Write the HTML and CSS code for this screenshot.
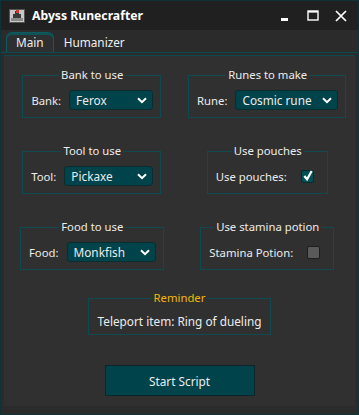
FILE: index.html
```html
<!DOCTYPE html>
<html lang="en">
<head>
    <meta charset="UTF-8">
    <title>Abyss Runecrafter</title>
    <link rel="stylesheet" href="styles.css">
</head>
<body>
<div class="window">
    <div class="titleBar">
        <svg class="appIcon" width="16" height="16" viewBox="0 0 16 16">
            <rect x="0.5" y="1.5" width="15" height="13" fill="#c8c8c8" stroke="#555"/>
            <rect x="2" y="10" width="12" height="3" fill="#8a8a8a"/>
            <path d="M6 3h4v3h2v4H4V6h2z" fill="#3a3a3a"/>
            <rect x="7" y="2" width="3" height="3" fill="#d23a2a"/>
        </svg>
        <span class="title">Abyss Runecrafter</span>
        <div class="winCtrl">
            <svg width="12" height="12" viewBox="0 0 12 12"><rect x="2" y="8" width="7" height="3" fill="#fff"/></svg>
            <svg width="12" height="12" viewBox="0 0 12 12"><rect x="1" y="1" width="10" height="9" fill="none" stroke="#fff" stroke-width="1.4"/><rect x="1" y="1" width="10" height="1.6" fill="#fff"/></svg>
            <svg width="12" height="12" viewBox="0 0 12 12"><path d="M1 1L11 11M11 1L1 11" stroke="#fff" stroke-width="1.7"/></svg>
        </div>
    </div>
    <div class="tabs">
        <div class="tab active">Main</div>
        <div class="tab">Humanizer</div>
    </div>
    <div class="panel">
        <div class="groups">
            <fieldset class="group">
                <legend>Bank to use</legend>
                <div class="row">
                    <span class="lbl">Bank:</span>
                    <div class="combo wBank">Ferox<svg class="chev" viewBox="0 0 10 7"><path d="M1 1.2l4 4 4-4" fill="none" stroke="#fff" stroke-width="2"/></svg></div>
                </div>
            </fieldset>
            <fieldset class="group">
                <legend>Runes to make</legend>
                <div class="row">
                    <span class="lbl">Rune:</span>
                    <div class="combo wRune">Cosmic rune<svg class="chev" viewBox="0 0 10 7"><path d="M1 1.2l4 4 4-4" fill="none" stroke="#fff" stroke-width="2"/></svg></div>
                </div>
            </fieldset>
            <fieldset class="group">
                <legend>Tool to use</legend>
                <div class="row">
                    <span class="lbl">Tool:</span>
                    <div class="combo wTool">Pickaxe<svg class="chev" viewBox="0 0 10 7"><path d="M1 1.2l4 4 4-4" fill="none" stroke="#fff" stroke-width="2"/></svg></div>
                </div>
            </fieldset>
            <fieldset class="group">
                <legend>Use pouches</legend>
                <div class="row">
                    <span class="lbl">Use pouches:</span>
                    <span class="check on"><svg viewBox="0 0 13 13"><path d="M2.5 6.5l3 3.5L10.5 1" fill="none" stroke="#fff" stroke-width="2.4"/></svg></span>
                </div>
            </fieldset>
            <fieldset class="group">
                <legend>Food to use</legend>
                <div class="row">
                    <span class="lbl">Food:</span>
                    <div class="combo wFood">Monkfish<svg class="chev" viewBox="0 0 10 7"><path d="M1 1.2l4 4 4-4" fill="none" stroke="#fff" stroke-width="2"/></svg></div>
                </div>
            </fieldset>
            <fieldset class="group">
                <legend>Use stamina potion</legend>
                <div class="row">
                    <span class="lbl">Stamina Potion:</span>
                    <span class="check"></span>
                </div>
            </fieldset>
        </div>
        <fieldset class="group reminder">
            <legend>Reminder</legend>
            <div class="note">Teleport item: Ring of dueling</div>
        </fieldset>
        <button class="startBtn">Start Script</button>
    </div>
</div>
</body>
</html>
```

FILE: styles.css
```css
body {
    margin: 0;
    background: #0e3336;
    font-family: "Noto Sans", "Open Sans", sans-serif;
    font-size: 11.3px;
    color: #ececec;
}

.window {
    width: 357px;
    height: 413px;
    margin: 1px;
    background: #2b2b2b;
    display: flex;
    flex-direction: column;
}

.titleBar {
    height: 29px;
    background: #202020;
    display: flex;
    align-items: center;
    padding: 0 0 0 8px;
}

.appIcon {
    flex: none;
    margin-right: 7px;
}

.title {
    font-weight: bold;
    font-size: 12.2px;
    color: #fff;
}

.winCtrl {
    margin-left: auto;
    display: flex;
    align-items: center;
    gap: 8px;
    padding-right: 7px;
}

.winCtrl svg {
    display: block;
    width: 12px;
    height: 12px;
    padding: 0 4px;
}

.tabs {
    height: 22px;
    display: flex;
    align-items: flex-end;
    padding-left: 5px;
    border-bottom: 1px solid #0d4a4f;
}

.tab {
    height: 19px;
    line-height: 19px;
    padding: 0 9px;
    margin-right: 1px;
    color: #f0f0f0;
    font-size: 11.8px;
}

.tab.active {
    border: 1px solid #0d5a60;
    border-bottom: none;
    border-radius: 6px 6px 0 0;
    background: #2d2f30;
    box-shadow: inset 0 2px 0 #0f5359;
}

.panel {
    flex: 1;
    margin: 2px 3px 8px 3px;
    background: #303030;
    border-top: 1px solid #0d4a4f;
    display: flex;
    flex-direction: column;
    align-items: center;
}

.groups {
    width: 100%;
    display: grid;
    grid-template-columns: 1fr 1fr;
    justify-items: center;
    row-gap: 25px;
    margin-top: 11px;
}

.group {
    margin: 0;
    padding: 7px 7px 7px 8px;
    border: 1px solid #0e4a4f;
    min-width: 0;
}

.group legend {
    margin: 0 auto;
    padding: 0 2px;
    line-height: 16px;
}

.row {
    display: flex;
    align-items: center;
    height: 20px;
}

.lbl {
    margin-right: 8px;
}

.combo {
    height: 18px;
    border: 1px solid #0a2d30;
    border-radius: 3px;
    background: #00434a;
    display: flex;
    align-items: center;
    padding: 0 5px 0 6px;
    font-size: 11.8px;
}

.wBank { width: 71px; }
.wRune { width: 90px; }
.wTool { width: 76px; }
.wFood { width: 76px; }

.chev {
    width: 10px;
    height: 7px;
    margin-left: auto;
}

.check {
    width: 11px;
    height: 11px;
    margin: 0 6px;
    border: 1px solid #1e1e1e;
    border-radius: 2px;
    background: #5a5a5a;
}

.check.on {
    background: #005056;
    border-color: #0a2a2d;
}

.check svg {
    display: block;
    width: 12px;
    height: 12px;
    margin-top: -1px;
}

.reminder {
    margin-top: 20px;
    padding: 7px 9px 5px 9px;
}

.reminder legend {
    color: #f2b705;
}

.note {
    line-height: 16px;
    font-size: 11.8px;
}

.startBtn {
    margin-top: 30px;
    width: 150px;
    height: 31px;
    background: #00434a;
    border: 1px solid #0b2528;
    color: #ececec;
    font-family: inherit;
    font-size: 11.8px;
}
```
